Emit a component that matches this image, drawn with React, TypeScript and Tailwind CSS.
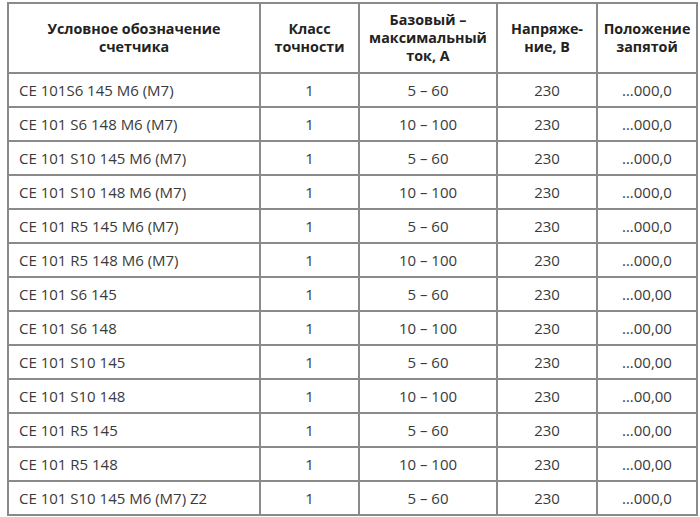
const rows: [string, string, string, string, string][] = [
  ['CE 101S6 145 M6 (M7)', '1', '5 – 60', '230', '…000,0'],
  ['CE 101 S6 148 M6 (M7)', '1', '10 – 100', '230', '…000,0'],
  ['CE 101 S10 145 M6 (M7)', '1', '5 – 60', '230', '…000,0'],
  ['CE 101 S10 148 M6 (M7)', '1', '10 – 100', '230', '…000,0'],
  ['CE 101 R5 145 M6 (M7)', '1', '5 – 60', '230', '…000,0'],
  ['CE 101 R5 148 M6 (M7)', '1', '10 – 100', '230', '…000,0'],
  ['CE 101 S6 145', '1', '5 – 60', '230', '…00,00'],
  ['CE 101 S6 148', '1', '10 – 100', '230', '…00,00'],
  ['CE 101 S10 145', '1', '5 – 60', '230', '…00,00'],
  ['CE 101 S10 148', '1', '10 – 100', '230', '…00,00'],
  ['CE 101 R5 145', '1', '5 – 60', '230', '…00,00'],
  ['CE 101 R5 148', '1', '10 – 100', '230', '…00,00'],
  ['CE 101 S10 145 M6 (M7) Z2', '1', '5 – 60', '230', '…000,0'],
]

export default function App() {
  return (
    <div className="w-[700px] h-[517px] bg-white pt-[2px] pl-[7px]" style={{ fontFamily: '"Open Sans", "Noto Sans", sans-serif' }}>
      <table className="table-fixed border-collapse w-[689px] border-2 border-[#3a3a3a]">
        <colgroup>
          <col className="w-[252px]" />
          <col className="w-[99px]" />
          <col className="w-[138px]" />
          <col className="w-[100px]" />
          <col className="w-[100px]" />
        </colgroup>
        <thead>
          <tr className="h-[70px] text-[14.3px] leading-[18px] font-bold text-[#222]">
            <th className="border-2 border-[#8a8a8a] px-1">Условное обозначение<br />счетчика</th>
            <th className="border-2 border-[#8a8a8a] px-1">Класс<br />точности</th>
            <th className="border-2 border-[#8a8a8a] px-1">Базовый –<br />максимальный<br />ток, А</th>
            <th className="border-2 border-[#8a8a8a] px-1">Напряже-<br />ние, В</th>
            <th className="border-2 border-[#8a8a8a] px-1">Положение<br />запятой</th>
          </tr>
        </thead>
        <tbody className="text-[15px] text-[#3a3a3a]">
          {rows.map((r, i) => (
            <tr key={i} className="h-[34px]">
              <td className="border-2 border-[#8a8a8a] pl-[10px] whitespace-nowrap">{r[0]}</td>
              <td className="border-2 border-[#8a8a8a] text-center">{r[1]}</td>
              <td className="border-2 border-[#8a8a8a] text-center">{r[2]}</td>
              <td className="border-2 border-[#8a8a8a] text-center">{r[3]}</td>
              <td className="border-2 border-[#8a8a8a] text-center">{r[4]}</td>
            </tr>
          ))}
        </tbody>
      </table>
    </div>
  )
}
